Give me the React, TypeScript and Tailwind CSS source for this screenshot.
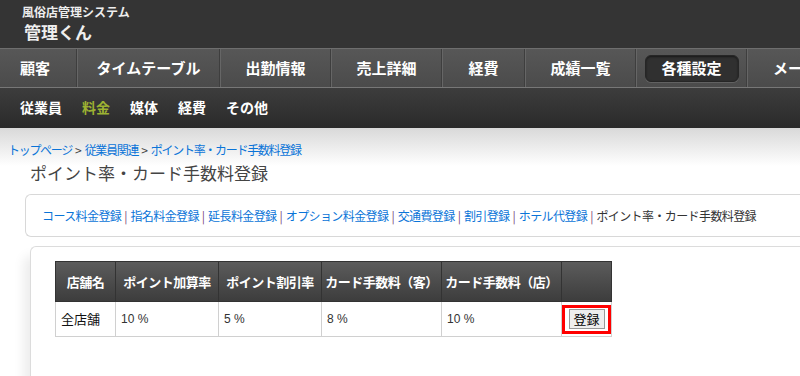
import React from "react";

const jp = { fontFamily: '"Noto Sans CJK JP", "Noto Sans", sans-serif' };

const navItems: { label: string; w: string; active?: boolean }[] = [
  { label: "顧客", w: "w-[76px] justify-start pl-[20px]" },
  { label: "タイムテーブル", w: "w-[141px] justify-center" },
  { label: "出勤情報", w: "w-[109px] justify-center" },
  { label: "売上詳細", w: "w-[109px] justify-center" },
  { label: "経費", w: "w-[81px] justify-center" },
  { label: "成績一覧", w: "w-[109px] justify-center" },
  { label: "各種設定", w: "w-[109px] justify-center", active: true },
  { label: "メール配信", w: "w-[109px] justify-start pl-[25px]" },
];

const subItems = [
  { label: "従業員" },
  { label: "料金", active: true },
  { label: "媒体" },
  { label: "経費" },
  { label: "その他" },
];

const links = [
  "コース料金登録",
  "指名料金登録",
  "延長料金登録",
  "オプション料金登録",
  "交通費登録",
  "割引登録",
  "ホテル代登録",
];

function Sep() {
  return (
    <div className="flex h-[38px] shrink-0">
      <div className="w-px bg-[#3e3e3e]" />
      <div className="w-px bg-[#666]" />
    </div>
  );
}

export default function App() {
  return (
    <div className="w-[800px] h-[376px] overflow-hidden bg-white" style={jp}>
      {/* top header */}
      <div className="h-[48px] bg-[#343434] pl-[22px] pt-[4px]">
        <div className="text-[12px] leading-[16px] font-bold text-[#eee]">風俗店管理システム</div>
        <div className="text-[17px] leading-[22px] font-bold text-[#eee] pl-[2px] mt-[1px]">管理くん</div>
      </div>
      {/* main nav */}
      <div className="h-[40px] border-t border-[#6e6e6e] border-b border-b-[#777] bg-gradient-to-b from-[#575757] to-[#4b4b4b] flex items-center overflow-hidden whitespace-nowrap">
        {navItems.map((it, i) => (
          <React.Fragment key={i}>
            {i > 0 && <Sep />}
            <div className={`${it.w} shrink-0 h-[38px] flex items-center`}>
              {it.active ? (
                <div className="w-[94px] h-[27px] rounded-[6px] bg-[#303030] border border-[#262626] shadow-[inset_0_1px_2px_rgba(0,0,0,0.5),0_1px_0_rgba(255,255,255,0.12)] flex items-center justify-center text-[15px] font-bold text-white">
                  {it.label}
                </div>
              ) : (
                <span className="text-[15px] font-bold text-white">{it.label}</span>
              )}
            </div>
          </React.Fragment>
        ))}
      </div>
      {/* sub nav */}
      <div className="h-[40px] bg-gradient-to-b from-[#3d3d3d] to-[#2a2a2a] flex items-center gap-[20px] pl-[20px] pb-[2px]">
        {subItems.map((s, i) => (
          <span key={i} className={`text-[14px] font-bold ${s.active ? "text-[#9db232]" : "text-white"}`}>
            {s.label}
          </span>
        ))}
      </div>
      {/* content */}
      <div className="bg-gradient-to-b from-[#d9d9d9] to-white to-[38px] pt-[14px]">
        <div className="pl-[8px] text-[12px] leading-[16px] text-[#444] whitespace-nowrap flex items-center">
          <span className="text-[#0a74d8] tracking-[-1.3px]">トップページ</span>
          <span className="px-[3px]">&gt;</span>
          <span className="text-[#0a74d8] tracking-[-1.3px]">従業員関連</span>
          <span className="px-[3px]">&gt;</span>
          <span className="text-[#0a74d8] tracking-[-1.3px]">ポイント率・カード手数料登録</span>
        </div>
        <div className="pl-[30px] mt-[3px] text-[17px] leading-[24px] text-[#444]">ポイント率・カード手数料登録</div>
        <div className="ml-[25px] mt-[9px] h-[43px] border border-[#d8d8d8] border-r-0 rounded-l-[6px] flex items-center pl-[16px] text-[12px] whitespace-nowrap">
          {links.map((l, i) => (
            <React.Fragment key={i}>
              <span className="text-[#0a74d8] tracking-[-0.6px]">{l}</span>
              <span className="text-[#7a4a7a] px-[3px]">|</span>
            </React.Fragment>
          ))}
          <span className="text-[#333] tracking-[-0.6px]">ポイント率・カード手数料登録</span>
        </div>
        <div className="ml-[30px] mt-[9px] h-[140px] border border-[#dcdcdc] border-r-0 rounded-tl-[6px] shadow-[-6px_10px_12px_rgba(0,0,0,0.08)] pl-[24px] pt-[14px]">
          <table className="border-collapse text-[13px]">
            <thead>
              <tr className="h-[40px] bg-gradient-to-b from-[#5c5c5c] to-[#3c3c3c] text-white">
                {[
                  ["店舗名", "w-[60px]"],
                  ["ポイント加算率", "w-[103px]"],
                  ["ポイント割引率", "w-[103px]"],
                  ["カード手数料（客）", "w-[120px]"],
                  ["カード手数料（店）", "w-[120px]"],
                  ["", "w-[48px]"],
                ].map(([t, w], i) => (
                  <th key={i} className={`${w} border border-[#333] font-bold text-[13px] p-0 tracking-[-0.5px]`}>
                    {t}
                  </th>
                ))}
              </tr>
            </thead>
            <tbody>
              <tr className="h-[35px]">
                <td className="border border-[#d0d0d0] pl-[5px] text-[#111]">全店舗</td>
                {["10 %", "5 %", "8 %", "10 %"].map((v, i) => (
                  <td key={i} className="border border-[#d0d0d0] pl-[5px] text-[#333] text-[12px]" style={{ fontFamily: '"Liberation Sans", Arial, sans-serif' }}>
                    {v}
                  </td>
                ))}
                <td className="border border-[#d0d0d0] p-0">
                  <div className="flex justify-center">
                    <div className="border-[3px] border-[#f00] w-[49px] h-[29px] flex items-center justify-center">
                      <button className="h-[20px] w-[36px] bg-[#eee] border border-[#999] text-[13px] leading-[18px] text-black p-0">
                        登録
                      </button>
                    </div>
                  </div>
                </td>
              </tr>
            </tbody>
          </table>
        </div>
      </div>
    </div>
  );
}
